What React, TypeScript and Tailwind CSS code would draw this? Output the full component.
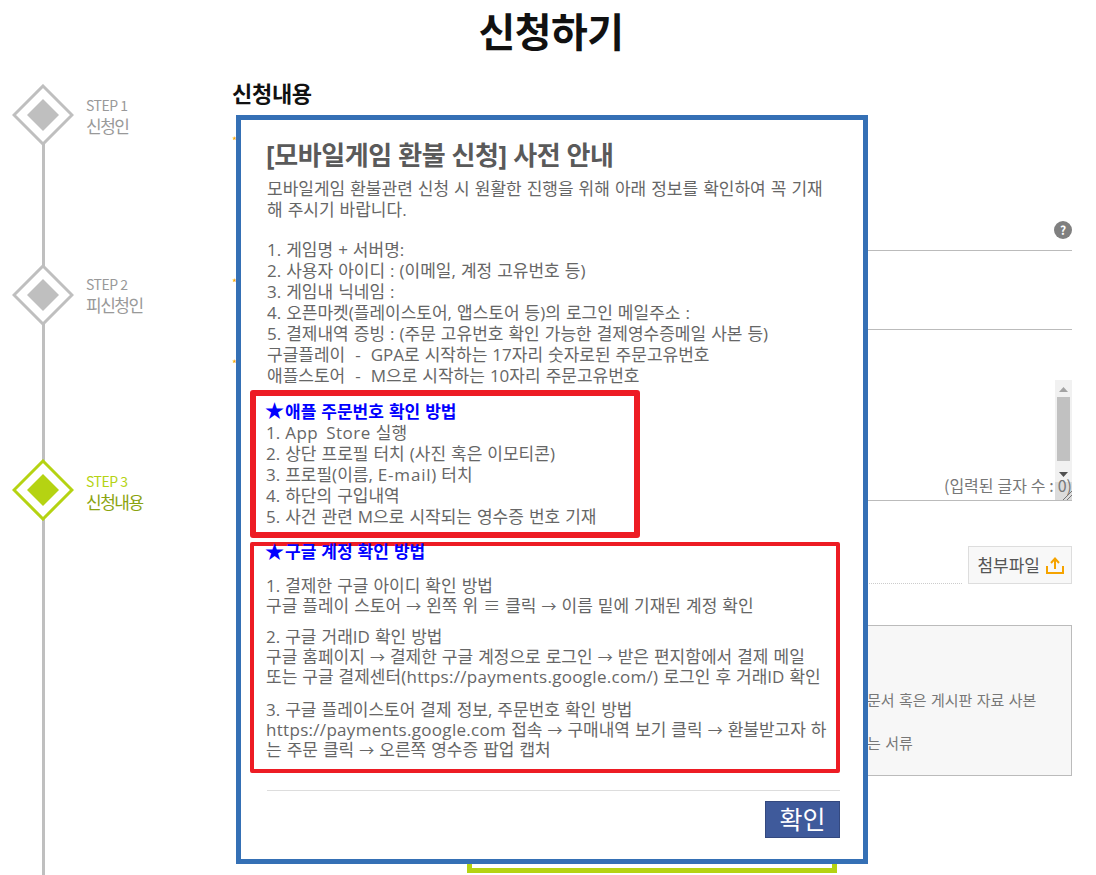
const FONT = "font-['Noto_Sans_CJK_KR','Noto_Sans',sans-serif]";

const steps = [
  { label: "STEP 1", name: "신청인", on: false, h: "h-[180px]", pt: "pt-[11px]" },
  { label: "STEP 2", name: "피신청인", on: false, h: "h-[195px]", pt: "pt-[10px]" },
  { label: "STEP 3", name: "신청내용", on: true, h: "h-[415px]", pt: "pt-[12px]" },
];

function Diamond({ on }: { on: boolean }) {
  const color = on ? "#b5d312" : "#bfbfbf";
  return (
    <svg width="62" height="62" viewBox="0 0 62 62" className="relative">
      <path d="M31 2 L60 31 L31 60 L2 31 Z" fill="#fff" stroke={color} strokeWidth="3" />
      <path d="M31 15 L47 31 L31 47 L15 31 Z" fill={color} />
    </svg>
  );
}

function Sidebar() {
  return (
    <div className="relative w-[232px] shrink-0 pl-[12px] pt-[5px]">
      <div className="absolute left-[42px] top-[30px] bottom-0 w-[3px] bg-[#bfbfbf]" />
      {steps.map((s) => (
        <div key={s.label} className={`relative flex items-start gap-[12px] ${s.h}`}>
          <Diamond on={s.on} />
          <div className={s.pt}>
            <div className={`text-[14px] leading-[20px] tracking-[-0.5px] ${s.on ? "text-[#b5d312]" : "text-[#999999]"}`}>{s.label}</div>
            <div className={`text-[17px] leading-[22px] tracking-[-1.5px] ${s.on ? "text-[#8aa30f]" : "text-[#999999]"}`}>{s.name}</div>
          </div>
        </div>
      ))}
    </div>
  );
}

function FormBehind() {
  return (
    <div className="w-[840px] text-[#777777]">
      <div className="mb-[30px] text-[22px] font-bold leading-[26px] text-[#111111] tracking-[-0.3px]">신청내용</div>
      <div className="relative ml-[40px] h-[116px] border-b border-[#bbbbbb]">
        <span className="absolute left-[-40px] top-[-3px] text-[11px] text-[#f5a300]">*</span>
        <div className="absolute right-0 bottom-[11px] flex h-[18px] w-[18px] items-center justify-center rounded-full bg-[#808080] text-[12px] font-bold text-white">?</div>
      </div>
      <div className="relative ml-[40px] h-[79px] border-b border-[#bbbbbb]">
        <span className="absolute left-[-40px] top-[23px] text-[11px] text-[#f5a300]">*</span>
      </div>
      <div className="relative ml-[40px] h-[171px] border-b border-[#bbbbbb]">
        <span className="absolute left-[-40px] top-[25px] text-[11px] text-[#f5a300]">*</span>
        <div className="absolute right-0 bottom-0 flex h-[120px] w-[17px] flex-col items-center bg-[#f1f1f1]">
          <svg width="9" height="5" viewBox="0 0 9 5" className="mt-[7px]"><path d="M4.5 0 L9 5 H0 Z" fill="#a3a3a3" /></svg>
          <div className="mt-[5px] h-[64px] w-[13px] bg-[#c1c1c1]" />
          <svg width="9" height="5" viewBox="0 0 9 5" className="mt-[11px]"><path d="M0 0 H9 L4.5 5 Z" fill="#505050" /></svg>
          <div className="mt-auto flex h-[18px] w-full items-end justify-end bg-[#dcdcdc]">
            <svg width="10" height="10" viewBox="0 0 10 10" stroke="#777777" strokeWidth="1"><path d="M1 10 L10 1 M5 10 L10 5" /></svg>
          </div>
        </div>
        <span className="absolute right-0 bottom-[5px] text-[16px] leading-[20px] [word-spacing:0.3px]">(입력된 글자 수 : 0)</span>
      </div>
      <div className="ml-[40px] mt-[45px] flex items-end gap-[6px]">
        <div className="flex-1 border-b border-dotted border-[#cccccc]" />
        <div className="flex h-[38px] w-[104px] items-center justify-end gap-[6px] border border-[#dddddd] bg-[#f8f8f8] pr-[7px] text-[17px] text-[#555555]">
          첨부파일
          <svg width="18" height="18" viewBox="0 0 18 18" fill="none" stroke="#f5a300" strokeWidth="2">
            <path d="M1 10 V17 H17 V10" />
            <path d="M9 13 V3 M5 7 L9 2.5 L13 7" />
          </svg>
        </div>
      </div>
      <div className="ml-[40px] mt-[41px] h-[151px] border border-[#bbbbbb] bg-[#f7f7f7] pl-[594px] pt-[63px] text-[15px] leading-[22px] [word-spacing:1px]">
        <div className="whitespace-nowrap">문서 혹은 게시판 자료 사본</div>
        <div className="mt-[21px] whitespace-nowrap">는 서류</div>
      </div>
      <div className="ml-[235px] mt-[44px] h-[53px] w-[370px] border-[5px] border-[#b5d312]" />
    </div>
  );
}

function BlueHeading({ children }: { children: string }) {
  return (
    <div className="flex items-center gap-[1px] font-bold text-[#0000ff]">
      <span className="-ml-[1px] text-[19px] leading-none">★</span>
      <span>{children}</span>
    </div>
  );
}

function Arrow() {
  return <span className="text-[15px]">→</span>;
}

function Latin({ children }: { children: string }) {
  return <span className="tracking-[0.3px]">{children}</span>;
}

function Modal() {
  return (
    <div className="absolute left-[236px] top-[115px] h-[749px] w-[632px] border-[5px] border-[#3570b5] bg-white pl-[26px] pr-[23px] pt-[13px] font-['Open_Sans','Noto_Sans_CJK_KR',sans-serif] text-[17px] leading-[21px] text-[#666666] [word-spacing:0.6px]">
      <div className="-ml-[1px] text-[26px] font-bold leading-[44px] text-[#5a5a5a] tracking-[-0.4px] [word-spacing:0px]">[모바일게임 환불 신청] 사전 안내</div>
      <div className="mt-[1px]">모바일게임 환불관련 신청 시 원활한 진행을 위해 아래 정보를 확인하여 꼭 기재<br />해 주시기 바랍니다.</div>
      <div className="mt-[19px] whitespace-nowrap">
        <div>1. 게임명 + 서버명:</div>
        <div>2. 사용자 아이디 : (이메일, 계정 고유번호 등)</div>
        <div>3. 게임내 닉네임 :</div>
        <div>4. 오픈마켓(플레이스토어, 앱스토어 등)의 로그인 메일주소 :</div>
        <div>5. 결제내역 증빙 : (주문 고유번호 확인 가능한 결제영수증메일 사본 등)</div>
        <div>구글플레이 &nbsp;- &nbsp;GPA로 시작하는 17자리 숫자로된 주문고유번호</div>
        <div>애플스토어 &nbsp;- &nbsp;M으로 시작하는 10자리 주문고유번호</div>
      </div>
      <div className="ml-[-17px] mt-[4px] h-[148px] w-[390px] whitespace-nowrap rounded-[3px] border-[6px] border-[#ed1c24] pl-[10px] pt-[5px]">
        <BlueHeading>애플 주문번호 확인 방법</BlueHeading>
        <div>1. <span className="tracking-[0.5px] [word-spacing:3px]">App Store</span> 실행</div>
        <div>2. 상단 프로필 터치 (사진 혹은 이모티콘)</div>
        <div>3. 프로필(이름, <span className="tracking-[0.8px]">E-mail</span>) 터치</div>
        <div>4. 하단의 구입내역</div>
        <div>5. 사건 관련 M으로 시작되는 영수증 번호 기재</div>
      </div>
      <div className="ml-[-17px] mt-[4px] h-[231px] w-[590px] whitespace-nowrap rounded-[2px] border-[4px] border-[#ed1c24] pl-[12px] leading-[20px]">
        <div className="-mt-[4px]"><BlueHeading>구글 계정 확인 방법</BlueHeading></div>
        <div className="mt-[14px]">1. 결제한 구글 아이디 확인 방법<br />구글 플레이 스토어 <Arrow /> 왼쪽 위 ≡ 클릭 <Arrow /> 이름 밑에 기재된 계정 확인</div>
        <div className="mt-[11px]">2. 구글 거래ID 확인 방법<br />구글 홈페이지 <Arrow /> 결제한 구글 계정으로 로그인 <Arrow /> 받은 편지함에서 결제 메일<br />또는 구글 결제센터<Latin>(https://payments.google.com/)</Latin> 로그인 후 거래ID 확인</div>
        <div className="mt-[13px]">3. 구글 플레이스토어 결제 정보, 주문번호 확인 방법<br /><Latin>https://payments.google.com</Latin> 접속 <Arrow /> 구매내역 보기 클릭 <Arrow /> 환불받고자 하<br />는 주문 클릭 <Arrow /> 오른쪽 영수증 팝업 캡처</div>
      </div>
      <div className="mt-[17px] flex justify-end border-t border-[#dddddd] pt-[10px]">
        <button className="h-[37px] w-[75px] border border-[#34497f] bg-[#3f5a9b] text-[25px] leading-none text-white">확인</button>
      </div>
    </div>
  );
}

export default function App() {
  return (
    <div className={`relative h-[875px] w-[1096px] overflow-hidden bg-white ${FONT}`}>
      <h1 className="pl-[6px] pt-[2px] text-center text-[40px] font-bold leading-[56px] text-[#111111] tracking-[-0.5px]">신청하기</h1>
      <div className="mt-[21px] flex h-[796px]">
        <Sidebar />
        <FormBehind />
      </div>
      <Modal />
    </div>
  );
}
